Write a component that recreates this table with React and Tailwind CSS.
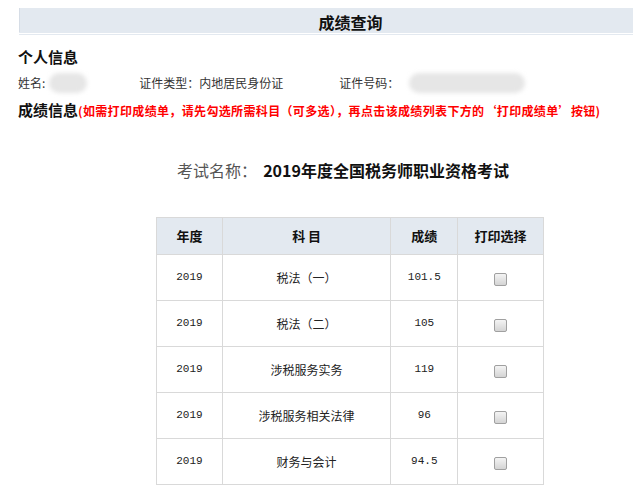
const rows = [
  { year: "2019", subject: "税法（一）", score: "101.5" },
  { year: "2019", subject: "税法（二）", score: "105" },
  { year: "2019", subject: "涉税服务实务", score: "119" },
  { year: "2019", subject: "涉税服务相关法律", score: "96" },
  { year: "2019", subject: "财务与会计", score: "94.5" },
];

const cjk = "font-['Noto_Sans_CJK_SC','Microsoft_YaHei',sans-serif]";

const Blob = ({ className }) => (
  <span className={`inline-block rounded-full bg-[#e6e6e6] blur-[2px] ${className}`} />
);

const Checkbox = () => (
  <span className="inline-block w-[13px] h-[13px] rounded-[2px] border border-[#a0a0a0] bg-gradient-to-b from-[#f4f4f4] to-[#d4d4d4] mt-[8px]" />
);

export default function App() {
  return (
    <div className={`w-full h-[493px] overflow-hidden bg-white text-[#333] ${cjk}`}>
      <div className="w-[700px]">
        <div className="mx-[19px] mt-[8px] border-b-[3px] border-double border-[#e3e9f0]">
          <div className="h-[24px] bg-[#e3e9f0] border-l border-[#d6dde6] flex items-center justify-center">
            <span className="text-[16px] font-bold text-[#111] leading-none mt-[4px]">成绩查询</span>
          </div>
        </div>

        <div className="pl-[18px] mt-[12px]">
          <div className="text-[15px] font-bold text-[#111] leading-[20px]">个人信息</div>
          <div className="flex items-center h-[20px] mt-[6px] text-[12px] text-[#333]">
            <span>姓名:</span>
            <Blob className="w-[38px] h-[20px] ml-[4px]" />
            <span className="ml-[52px]">证件类型：内地居民身份证</span>
            <span className="ml-[56px]">证件号码：</span>
            <Blob className="w-[116px] h-[20px] ml-[10px] rounded-[10px]" />
          </div>
          <div className="flex items-baseline mt-[6px] leading-[22px]">
            <span className="text-[15px] font-bold text-[#111]">成绩信息</span>
            <span className="text-[12px] font-bold text-[#f00] tracking-[0.35px]">
              (如需打印成绩单，请先勾选所需科目（可多选），再点击该成绩列表下方的‘打印成绩单’按钮)
            </span>
          </div>
        </div>

        <div className="flex justify-center items-baseline mt-[36px] pr-[14px] text-[16px] leading-[24px]">
          <span className="text-[#555]">考试名称：</span>
          <span className="ml-[6px] font-bold text-[#111]">2019年度全国税务师职业资格考试</span>
        </div>

        <div className="flex justify-center mt-[35px]">
          <table className="w-[388px] border-collapse border border-[#d9d9d9] text-center">
            <thead>
              <tr className="h-[37px] bg-[#e3e9f0] text-[13px] font-bold text-[#111]">
                <th className="w-[66px] border border-[#d9d9d9]">年度</th>
                <th className="w-[169px] border border-[#d9d9d9]">科 目</th>
                <th className="w-[67px] border border-[#d9d9d9]">成绩</th>
                <th className="w-[86px] border border-[#d9d9d9]">打印选择</th>
              </tr>
            </thead>
            <tbody>
              {rows.map((r) => (
                <tr key={r.subject} className="h-[46px] text-[12px] text-[#222]">
                  <td className="border border-[#d9d9d9] font-['Liberation_Mono',monospace] text-[11px]">{r.year}</td>
                  <td className="border border-[#d9d9d9]">{r.subject}</td>
                  <td className="border border-[#d9d9d9] font-['Liberation_Mono',monospace] text-[11px]">{r.score}</td>
                  <td className="border border-[#d9d9d9]">
                    <Checkbox />
                  </td>
                </tr>
              ))}
            </tbody>
          </table>
        </div>
      </div>
    </div>
  );
}
